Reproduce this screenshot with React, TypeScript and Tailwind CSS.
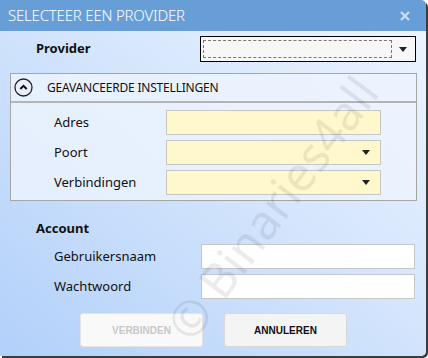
import React from 'react';

const font = { fontFamily: '"Noto Sans", "Open Sans", sans-serif' };
const btnFont = { fontFamily: '"Liberation Sans", Arial, sans-serif' };

const Arrow = () => (
  <svg width="8" height="5" viewBox="0 0 8 5" className="shrink-0">
    <path d="M0 0h8L4 5z" fill="#222" />
  </svg>
);

const FieldRow: React.FC<{ label: string; select?: boolean }> = ({ label, select }) => (
  <div className="flex items-center h-[25px]">
    <div className="w-[155px] pl-[43px] text-[13px] text-[#111]">{label}</div>
    <div className="w-[215px] h-[25px] bg-[#fff8cd] border border-[#c6c6c6] flex items-center justify-end pr-[10px]">
      {select && <Arrow />}
    </div>
  </div>
);

const AccountRow: React.FC<{ label: string }> = ({ label }) => (
  <div className="flex items-center h-[25px]">
    <div className="w-[201px] pl-[54px] text-[13px] text-[#111]">{label}</div>
    <div className="w-[214px] h-[25px] bg-white border border-[#c6c6c6]" />
  </div>
);

export default function App() {
  return (
    <div className="w-[428px] h-[358px] bg-white relative overflow-hidden" style={font}>
      <div className="w-[426px] h-[356px] rounded-tr-[5px] rounded-br-[5px] overflow-hidden shadow-[2px_2px_0_#3c3c3c] flex flex-col bg-linear-to-tr from-[#b2d0fa] via-[#d2e4fc] to-[#eef5ff] relative">
        <div className="h-[31px] bg-[#679ed8] flex items-center justify-between pl-[8px] pr-[16px] shrink-0">
          <span className="text-white text-[15px] font-light tracking-[-0.2px]">SELECTEER EEN PROVIDER</span>
          <svg width="10" height="10" viewBox="0 0 10 10">
            <path d="M1 1l8 8M9 1l-8 8" stroke="#cfe0f4" strokeWidth="2" />
          </svg>
        </div>

        <div className="flex flex-col pt-[5px]">
          <div className="flex items-center h-[26px]">
            <div className="w-[200px] pl-[36px] text-[13px] font-bold text-[#111]">Provider</div>
            <div className="w-[216px] h-[26px] bg-[#f7f7f7] border border-black flex items-center pl-[2px] pr-[8px] gap-[7px]">
              <div className="flex-1 h-[18px] border border-dashed border-[#777]" />
              <Arrow />
            </div>
          </div>

          <div className="ml-[10px] mt-[11px] w-[407px] h-[128px] border border-[#a6a6a6] bg-[#eef4fe]/80 flex flex-col">
            <div className="h-[29px] border-b-2 border-[#b4b4b4] flex items-center pl-[3px] gap-[14px] shrink-0">
              <svg width="19" height="19" viewBox="0 0 19 19">
                <circle cx="9.5" cy="9.5" r="8.5" fill="none" stroke="#222" strokeWidth="1.3" />
                <path d="M6.3 11l3.2-3.2 3.2 3.2" fill="none" stroke="#111" strokeWidth="2" />
              </svg>
              <span className="text-[12px] text-[#111] tracking-[-0.2px]">GEAVANCEERDE INSTELLINGEN</span>
            </div>
            <div className="flex flex-col gap-[5px] pt-[7px]">
              <FieldRow label="Adres" />
              <FieldRow label="Poort" select />
              <FieldRow label="Verbindingen" select />
            </div>
          </div>

          <div className="mt-[18px] h-[20px] flex items-center pl-[36px] text-[13px] font-bold text-[#111]">Account</div>
          <div className="flex flex-col gap-[5px] mt-[5px]">
            <AccountRow label="Gebruikersnaam" />
            <AccountRow label="Wachtwoord" />
          </div>

          <div className="flex gap-[21px] pl-[80px] mt-[14px]">
            <div className="w-[123px] h-[34px] rounded-[3px] bg-[#f9f9f9] border border-[#e4e4e4] flex items-center justify-center text-[10px] font-bold text-[#c8c8c8]" style={btnFont}>
              VERBINDEN
            </div>
            <div className="w-[123px] h-[34px] rounded-[3px] bg-[#f4f4f4] border border-[#d8d8d8] flex items-center justify-center text-[10px] font-bold text-[#111]" style={btnFont}>
              ANNULEREN
            </div>
          </div>
        </div>

        <div className="absolute left-[272px] top-[208px] -translate-x-1/2 -translate-y-1/2 -rotate-[53deg] text-[48px] text-black/[0.08] whitespace-nowrap pointer-events-none select-none">
          © Binaries4all
        </div>
      </div>
    </div>
  );
}
